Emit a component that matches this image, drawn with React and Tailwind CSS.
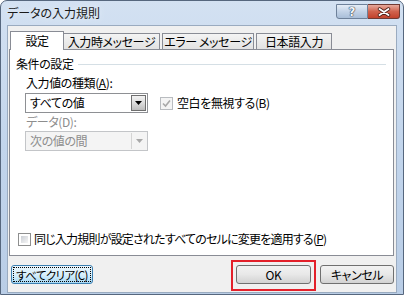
export default function App() {
  const base = "font-['Noto_Sans_CJK_JP',sans-serif] [font-feature-settings:'palt'] leading-[14px] whitespace-nowrap";
  const jp = `${base} text-[12px] tracking-[-0.4px]`;
  return (
    <div className="relative w-[404px] h-[295px] overflow-hidden bg-white">
      <div className="w-[404px] h-[295px] rounded-t-[7px] border border-[#56677e] bg-gradient-to-b from-[#d3e1f2] via-[#c2d5ec] to-[#b9cde6] flex flex-col">
        {/* title bar */}
        <div className="h-[24px] flex items-center pl-[6px] pr-[3px]">
          <span className={`${base} text-[12px] tracking-[0px] text-[#1a1a1a] [text-shadow:0_0_6px_#eef4fb]`}>データの入力規則</span>
          <div className="ml-auto self-start mt-[3px] flex">
            <div className="w-[32px] h-[15px] rounded-bl-[3px] border border-[#6e819a] bg-gradient-to-b from-[#e4ecf6] via-[#c3d3e7] to-[#a9bed8] flex items-center justify-center">
              <span className="font-['DejaVu_Sans',sans-serif] font-bold text-[12px] leading-[12px] text-[#f4f6f9] [text-shadow:0_0_1px_#2b3a50,0_0_1px_#2b3a50,0_0_1px_#2b3a50]">?</span>
            </div>
            <div className="w-[32px] h-[15px] rounded-br-[3px] border border-l-0 border-[#6f3a33] bg-gradient-to-b from-[#e6a99c] via-[#d0624d] to-[#c2422c] flex items-center justify-center">
              <svg width="14" height="10" viewBox="0 0 14 10">
                <path d="M2.5 2 L11.5 8 M11.5 2 L2.5 8" stroke="#4a1e17" strokeWidth="3.4" strokeLinecap="round" />
                <path d="M2.5 2 L11.5 8 M11.5 2 L2.5 8" stroke="#ffffff" strokeWidth="1.9" strokeLinecap="round" />
              </svg>
            </div>
          </div>
        </div>
        {/* content */}
        <div className="flex-1 mx-[6px] mb-[1px] border border-[#9aabc0] bg-[#f0f0f0] flex flex-col">
          {/* tabs */}
          <div className="relative z-10 mt-[5px] h-[18px] pl-[2px] flex items-end">
            <div className={`${jp} w-[54px] h-[19px] -mb-[1px] bg-white border border-b-0 border-[#898c95] flex items-center justify-center text-black`}>設定</div>
            <div className={`${jp} w-[96px] h-[16px] bg-gradient-to-b from-[#f4f4f4] to-[#e2e2e2] border border-b-0 border-l-0 border-[#898c95] flex items-center justify-center text-black`}>入力時メッセージ</div>
            <div className={`${jp} ml-[2px] w-[92px] h-[16px] bg-gradient-to-b from-[#f4f4f4] to-[#e2e2e2] border border-b-0 border-[#898c95] flex items-center justify-center text-black`}>エラー メッセージ</div>
            <div className={`${jp} ml-[2px] w-[76px] h-[16px] bg-gradient-to-b from-[#f4f4f4] to-[#e2e2e2] border border-b-0 border-[#898c95] flex items-center justify-center text-black`}>日本語入力</div>
          </div>
          {/* panel */}
          <div className="ml-[1px] w-[385px] h-[207px] border border-[#898c95] bg-white flex flex-col">
            <div className="mt-[7px] h-[14px] pl-[6px] pr-[7px] flex items-center">
              <span className={`${jp} text-black`}>条件の設定</span>
              <div className="flex-1 ml-[4px] h-px bg-[#d5dfe5]" />
            </div>
            <div className={`${jp} mt-[5px] pl-[16px] text-black`}>
              入力値の種類(<span className="underline">A</span>):
            </div>
            <div className="mt-[3px] pl-[15px] flex items-center">
              <div className="w-[123px] h-[20px] border border-[#8e9094] bg-white flex items-center">
                <span className={`${jp} pl-[4px] text-black`}>すべての値</span>
                <div className="ml-auto mr-px w-[15px] h-[16px] border border-[#6f6f6f] bg-gradient-to-b from-[#f2f2f2] via-[#dcdcdc] to-[#bdbdbd] flex items-center justify-center">
                  <svg width="7" height="4" viewBox="0 0 7 4"><path d="M0 0 H7 L3.5 4 Z" fill="#000" /></svg>
                </div>
              </div>
              <div className="ml-[12px] w-[13px] h-[13px] border border-[#b9bcc0] bg-[#f4f4f4] flex items-center justify-center">
                <svg width="9" height="9" viewBox="0 0 9 9"><path d="M1 4.5 L3.5 7 L8 1.5" stroke="#a8a8a8" strokeWidth="1.6" fill="none" /></svg>
              </div>
              <span className={`${jp} ml-[4px] text-black`}>空白を無視する(B)</span>
            </div>
            <div className={`${jp} mt-[2px] pl-[16px] text-[#8d8d8d]`}>データ(D):</div>
            <div className="mt-[2px] pl-[15px] flex">
              <div className="w-[123px] h-[20px] border border-[#c3c5c8] bg-[#f4f4f4] flex items-center">
                <span className={`${jp} pl-[4px] text-[#8d8d8d]`}>次の値の間</span>
                <div className="ml-auto mr-px w-[15px] h-[16px] border-l border-[#d4d4d4] bg-[#f4f4f4] flex items-center justify-center">
                  <svg width="7" height="4" viewBox="0 0 7 4"><path d="M0 0 H7 L3.5 4 Z" fill="#a8a8a8" /></svg>
                </div>
              </div>
            </div>
            <div className="mt-auto mb-[9px] pl-[8px] flex items-center">
              <div className="w-[13px] h-[13px] border border-[#8e8f8f] bg-white p-[2px]">
                <div className="w-full h-full bg-gradient-to-br from-[#cbcfd5] to-[#f6f6f6]" />
              </div>
              <span className={`${base} text-[12px] tracking-[-0.8px] ml-[3px] text-black`}>
                同じ入力規則が設定されたすべてのセルに変更を適用する(<span className="underline">P</span>)
              </span>
            </div>
          </div>
          {/* buttons */}
          <div className="mt-[9px] pl-[3px] pr-[2px] flex">
            <div className="w-[82px] h-[19px] rounded-[3px] border border-[#3c7fb1] bg-gradient-to-b from-[#eaf6fd] via-[#d9f0fc] to-[#a7d9f5] p-[1px]">
              <div className={`${base} text-[11.5px] tracking-[-0.6px] w-full h-full border border-dotted border-black flex items-center justify-center text-black`}>
                <span>すべてクリア(C)</span>
              </div>
            </div>
            <div className={`${jp} ml-auto w-[75px] h-[19px] rounded-[3px] border border-[#707070] bg-gradient-to-b from-[#f2f2f2] via-[#e8e8e8] to-[#d2d2d2] flex items-center justify-center text-black`}>OK</div>
            <div className={`${jp} ml-[9px] w-[74px] h-[19px] rounded-[3px] border border-[#707070] bg-gradient-to-b from-[#f2f2f2] via-[#e8e8e8] to-[#d2d2d2] flex items-center justify-center text-black`}>キャンセル</div>
          </div>
        </div>
      </div>
      <div className="absolute left-[231px] top-[260px] w-[85px] h-[31px] border-2 border-[#e3202a]" />
    </div>
  );
}
